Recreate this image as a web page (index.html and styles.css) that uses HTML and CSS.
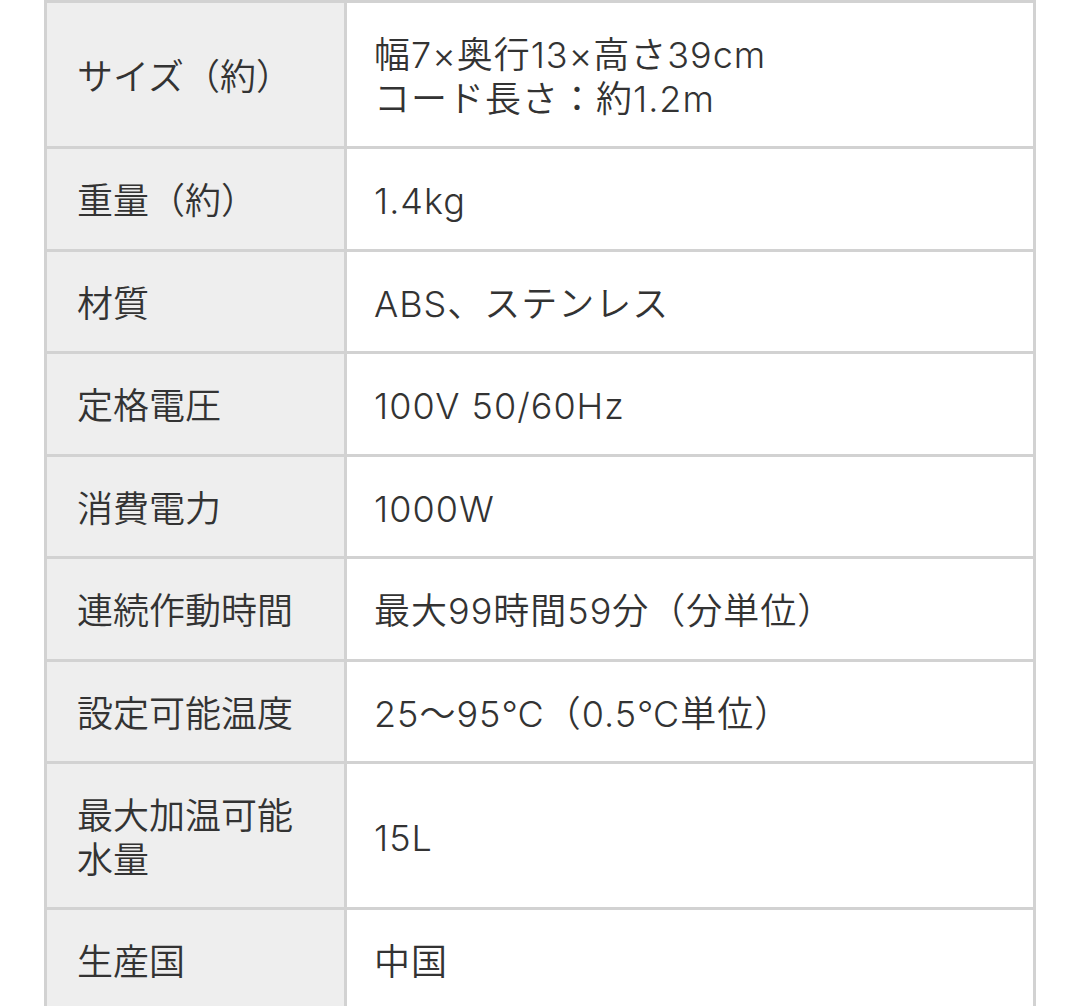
FILE: index.html
```html
<!DOCTYPE html>
<html lang="ja">
<head>
<meta charset="utf-8">
<link rel="stylesheet" href="styles.css">
</head>
<body>
<table class="spec">
  <tbody>
    <tr><th>サイズ（約）</th><td>幅7×奥行13×高さ39cm<br>コード長さ：約1.2m</td></tr>
    <tr><th>重量（約）</th><td>1.4kg</td></tr>
    <tr><th>材質</th><td>ABS、ステンレス</td></tr>
    <tr><th>定格電圧</th><td>100V 50/60Hz</td></tr>
    <tr><th>消費電力</th><td>1000W</td></tr>
    <tr><th>連続作動時間</th><td>最大99時間59分（分単位）</td></tr>
    <tr><th>設定可能温度</th><td>25～95℃（0.5℃単位）</td></tr>
    <tr><th>最大加温可能水量</th><td>15L</td></tr>
    <tr><th>生産国</th><td>中国</td></tr>
  </tbody>
</table>
</body>
</html>
```
FILE: styles.css
```css
html, body {
  margin: 0;
  padding: 0;
  background: #ffffff;
}
body {
  font-family: Inter, "Noto Sans CJK JP", sans-serif;
  color: #333333;
}
.spec {
  margin-left: 44px;
  width: 992px;
  border-collapse: collapse;
  table-layout: fixed;
  font-size: 36px;
  line-height: 43.5px;
}
.spec th,
.spec td {
  border: 3px solid #d2d2d2;
  padding: 31px 0 25px;
  vertical-align: middle;
  text-align: left;
  font-weight: 350;
}
.spec th {
  width: 300px;
  box-sizing: border-box;
  background: #eeeeee;
  padding-left: 30px;
  padding-right: 30px;
}
.spec td {
  background: #ffffff;
  padding-left: 27px;
  letter-spacing: 1px;
}
```
